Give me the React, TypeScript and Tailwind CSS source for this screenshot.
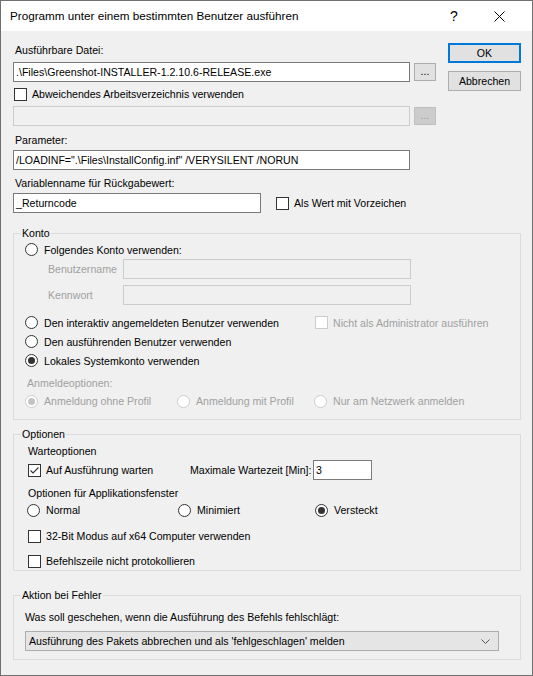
import clsx from "clsx";
import type { ReactNode } from "react";

const uiFont = "font-['Liberation_Sans',Arial,sans-serif] text-[10.6px] leading-[14px]";

function CheckBox({
  label,
  checked = false,
  disabled = false,
  className = "",
}: {
  label: ReactNode;
  checked?: boolean;
  disabled?: boolean;
  className?: string;
}) {
  return (
    <div className={clsx("flex items-center gap-[5px]", disabled && "text-[#a0a0a0]", className)}>
      <span
        className={clsx(
          "w-[13px] h-[13px] border bg-white flex items-center justify-center shrink-0",
          disabled ? "border-[#cccccc]" : "border-[#333333]"
        )}
      >
        {checked && (
          <svg width="11" height="11" viewBox="0 0 11 11">
            <path d="M1.5 5.5 L4 8 L9.5 2.5" stroke="#333333" strokeWidth="1.1" fill="none" />
          </svg>
        )}
      </span>
      <span className="whitespace-nowrap">{label}</span>
    </div>
  );
}

function Radio({
  label,
  checked = false,
  disabled = false,
  className = "",
}: {
  label: ReactNode;
  checked?: boolean;
  disabled?: boolean;
  className?: string;
}) {
  return (
    <div className={clsx("flex items-center gap-[6px]", disabled && "text-[#a0a0a0]", className)}>
      <span
        className={clsx(
          "w-[13px] h-[13px] rounded-full border bg-white flex items-center justify-center shrink-0",
          disabled ? "border-[#cccccc]" : "border-[#333333]"
        )}
      >
        {checked && (
          <span className={clsx("w-[7px] h-[7px] rounded-full", disabled ? "bg-[#c4c4c4]" : "bg-[#333333]")} />
        )}
      </span>
      <span className="whitespace-nowrap">{label}</span>
    </div>
  );
}

function TextBox({
  value = "",
  disabled = false,
  className = "",
}: {
  value?: string;
  disabled?: boolean;
  className?: string;
}) {
  return (
    <div
      className={clsx(
        "h-[20px] border flex items-center pl-[2px] whitespace-nowrap overflow-hidden",
        disabled ? "border-[#cccccc] bg-[#f0f0f0]" : "border-[#7a7a7a] bg-white",
        className
      )}
    >
      {value}
    </div>
  );
}

function BrowseButton({ disabled = false }: { disabled?: boolean }) {
  return (
    <div
      className={clsx(
        "ml-[4px] w-[22px] h-[18px] border flex items-center justify-center leading-none pb-[2px]",
        disabled ? "bg-[#cccccc] border-[#bfbfbf] text-[#a0a0a0]" : "bg-[#e1e1e1] border-[#adadad]"
      )}
    >
      ...
    </div>
  );
}

function GroupBox({ title, children }: { title: string; children: ReactNode }) {
  return (
    <fieldset className="w-[508px] border border-[#dcdcdc]">
      <legend className="ml-[7px] px-[1px]">{title}</legend>
      {children}
    </fieldset>
  );
}

export default function App() {
  return (
    <div className={clsx("w-[533px] h-[676px] border border-[#707070] flex flex-col bg-[#f0f0f0] text-black", uiFont)}>
      {/* title bar */}
      <div className="h-[30px] bg-white flex items-center pl-[9px] shrink-0">
        <span className="text-[11.7px] flex-1 whitespace-nowrap">Programm unter einem bestimmten Benutzer ausführen</span>
        <span className="text-[14px] w-[12px] text-center mr-[34px]">?</span>
        <svg width="11" height="11" viewBox="0 0 11 11" className="mr-[27px]">
          <path d="M0.5 0.5 L10.5 10.5 M10.5 0.5 L0.5 10.5" stroke="#000" strokeWidth="1" />
        </svg>
      </div>

      <div className="flex-1 pl-[12px]">
        {/* file, working dir, params */}
        <div className="flex pt-[12px]">
          <div className="w-[424px]">
            <div className="h-[14px] pl-[2px]">Ausführbare Datei:</div>
            <div className="mt-[5px] flex items-center">
              <TextBox className="w-[397px]" value=".\Files\Greenshot-INSTALLER-1.2.10.6-RELEASE.exe" />
              <BrowseButton />
            </div>
            <CheckBox className="mt-[4px] h-[16px] ml-[1px]" label="Abweichendes Arbeitsverzeichnis verwenden" />
            <div className="mt-[4px] flex items-center">
              <TextBox className="w-[397px]" disabled />
              <BrowseButton disabled />
            </div>
            <div className="mt-[7px] h-[14px] pl-[2px]">Parameter:</div>
            <TextBox className="mt-[3px] w-[397px]" value={'/LOADINF=".\\Files\\InstallConfig.inf" /VERYSILENT /NORUN'} />
            <div className="mt-[6px] h-[14px] pl-[2px]">Variablenname für Rückgabewert:</div>
            <div className="mt-[3px] flex items-center">
              <TextBox className="w-[248px]" value="_Returncode" />
              <CheckBox className="ml-[15px]" label="Als Wert mit Vorzeichen" />
            </div>
          </div>
          <div className="ml-[11px] w-[73px] flex flex-col gap-[8px]">
            <div className="h-[20px] bg-[#e1e1e1] border-2 border-[#0078d7] flex items-center justify-center">OK</div>
            <div className="h-[20px] bg-[#e1e1e1] border border-[#adadad] flex items-center justify-center">Abbrechen</div>
          </div>
        </div>

        {/* account */}
        <div className="mt-[13px]">
          <GroupBox title="Konto">
            <div className="pl-[11px] pb-[8px]">
              <Radio className="h-[19px]" label="Folgendes Konto verwenden:" />
              <div className="h-[20px] flex items-center pl-[23px] text-[#a0a0a0]">
                <span className="w-[75px]">Benutzername</span>
                <TextBox className="w-[288px]" disabled />
              </div>
              <div className="mt-[6px] h-[20px] flex items-center pl-[23px] text-[#a0a0a0]">
                <span className="w-[75px]">Kennwort</span>
                <TextBox className="w-[288px]" disabled />
              </div>
              <div className="mt-[8px] h-[19px] flex items-center">
                <Radio className="w-[290px]" label="Den interaktiv angemeldeten Benutzer verwenden" />
                <CheckBox disabled label="Nicht als Administrator ausführen" />
              </div>
              <Radio className="h-[19px]" label="Den ausführenden Benutzer verwenden" />
              <Radio className="h-[19px]" checked label="Lokales Systemkonto verwenden" />
              <div className="mt-[6px] h-[14px] pl-[2px] text-[#a0a0a0]">Anmeldeoptionen:</div>
              <div className="mt-[1px] h-[20px] flex items-center">
                <Radio className="w-[152px]" disabled checked label="Anmeldung ohne Profil" />
                <Radio className="w-[137px]" disabled label="Anmeldung mit Profil" />
                <Radio disabled label="Nur am Netzwerk anmelden" />
              </div>
            </div>
          </GroupBox>
        </div>

        {/* options */}
        <div className="mt-[7px]">
          <GroupBox title="Optionen">
            <div className="pl-[14px] pb-[1px]">
              <div className="h-[19px] flex items-center">Warteoptionen</div>
              <div className="h-[20px] flex items-center">
                <CheckBox className="w-[162px]" checked label="Auf Ausführung warten" />
                <span className="w-[123px] whitespace-nowrap">Maximale Wartezeit [Min]:</span>
                <TextBox className="w-[59px]" value="3" />
              </div>
              <div className="mt-[6px] h-[14px]">Optionen für Applikationsfenster</div>
              <div className="h-[20px] flex items-center -ml-px">
                <Radio className="w-[151px]" label="Normal" />
                <Radio className="w-[137px]" label="Minimiert" />
                <Radio checked label="Versteckt" />
              </div>
              <CheckBox className="mt-[8px] h-[16px]" label="32-Bit Modus auf x64 Computer verwenden" />
              <CheckBox className="mt-[9px] h-[16px]" label="Befehlszeile nicht protokollieren" />
            </div>
          </GroupBox>
        </div>

        {/* error handling */}
        <div className="mt-[17px]">
          <GroupBox title="Aktion bei Fehler">
            <div className="pl-[11px] pb-[8px]">
              <div className="mt-[8px] h-[14px]">Was soll geschehen, wenn die Ausführung des Befehls fehlschlägt:</div>
              <div className="mt-[7px] w-[474px] h-[20px] bg-[#e5e5e5] border border-[#adadad] flex items-center pl-[3px] pr-[8px]">
                <span className="flex-1 whitespace-nowrap">Ausführung des Pakets abbrechen und als 'fehlgeschlagen' melden</span>
                <svg width="9" height="5" viewBox="0 0 9 5">
                  <path d="M0.5 0.5 L4.5 4.5 L8.5 0.5" stroke="#555555" strokeWidth="1" fill="none" />
                </svg>
              </div>
            </div>
          </GroupBox>
        </div>
      </div>
    </div>
  );
}
